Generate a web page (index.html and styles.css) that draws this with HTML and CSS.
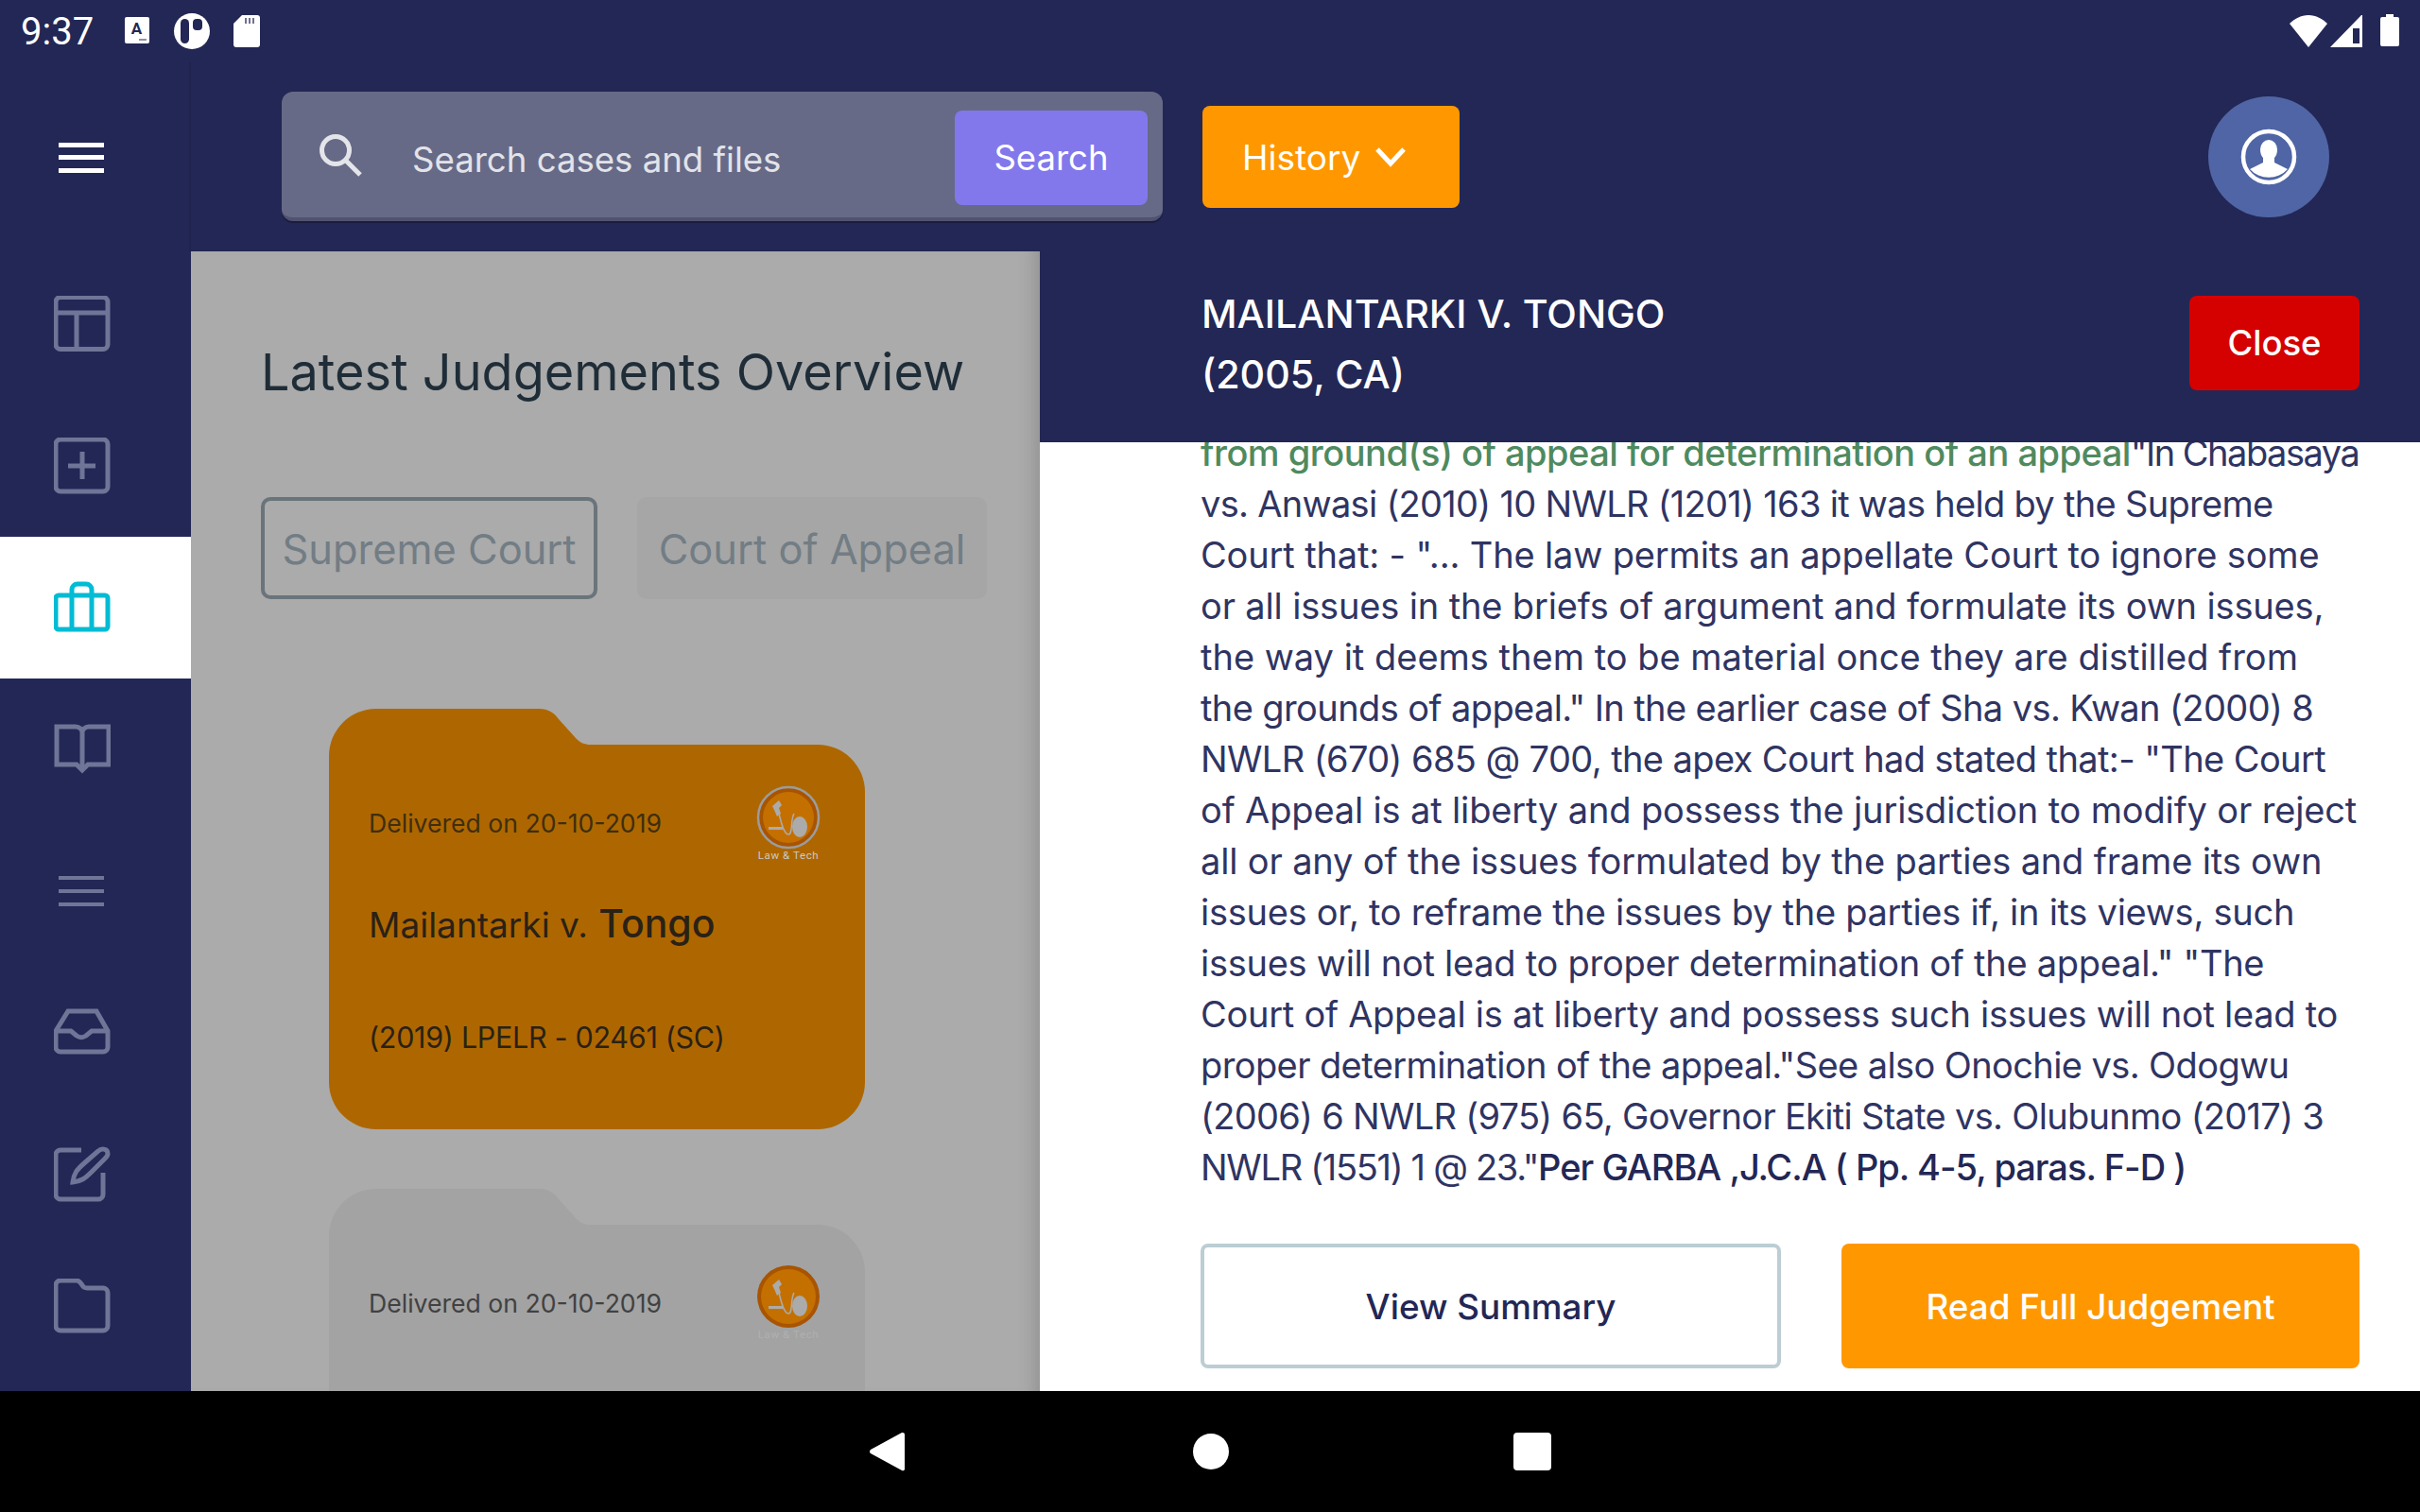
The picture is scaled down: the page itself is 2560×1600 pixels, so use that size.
FILE: index.html
```html
<!DOCTYPE html>
<html lang="en">
<head>
<meta charset="utf-8">
<title>Latest Judgements</title>
<link rel="stylesheet" href="styles.css">
</head>
<body>
<div class="screen">
  <div class="status">
    <span class="time">9:37</span>
    <svg class="st st-a" viewBox="0 0 26 28"><rect x="0" y="0" width="26" height="28" rx="2" fill="#fff"/><text x="12.500" y="18" class="st-a-t">A</text><path d="M15 23h8v2h-8z" fill="#8f91a8"/></svg>
    <svg class="st st-p" viewBox="0 0 38 38"><circle cx="19" cy="19" r="19" fill="#fff"/><rect x="7" y="6" width="9" height="26" rx="4.500" fill="#232755"/><rect x="20" y="6" width="10" height="12" rx="4" fill="#232755"/></svg>
    <svg class="st st-sd" viewBox="0 0 28 34"><path d="M9 0h16a3 3 0 0 1 3 3v28a3 3 0 0 1-3 3H3a3 3 0 0 1-3-3V9z" fill="#fff"/><path d="M12 3h2v6h-2zM16 3h2v6h-2zM20 3h2v6h-2z" fill="#6f7290"/></svg>
    <span class="status-gap"></span>
    <svg class="st st-wifi" viewBox="0 0 40 34"><path d="M20 34 0 9C5 4 12 0 20 0s15 4 20 9z" fill="#fff"/></svg>
    <svg class="st st-sig" viewBox="0 0 34 34"><path fill-rule="evenodd" d="M33 0h1v34H0zM24 14v16h7V14z" fill="#fff"/></svg>
    <svg class="st st-bat" viewBox="0 0 20 34"><path d="M6 0h8v3h4a2 2 0 0 1 2 2v27a2 2 0 0 1-2 2H2a2 2 0 0 1-2-2V5a2 2 0 0 1 2-2h4z" fill="#fff"/></svg>
  </div>

  <div class="main">
    <aside class="side">
      <div class="menu-slot">
        <svg class="ic-menu" viewBox="0 0 48 32"><path d="M0 0h48v5H0zM0 13h48v5H0zM0 27h48v5H0z" fill="#fff"/></svg>
      </div>
      <div class="item"><svg class="ic" viewBox="0 0 60 60"><g class="ln"><rect x="2" y="2" width="55" height="55" rx="5" transform="translate(0 -.5)"/><path d="M2 18h55M24 18v39"/></g></svg></div>
      <div class="item"><svg class="ic" viewBox="0 0 60 60"><g class="ln"><rect x="2" y="2" width="55" height="55" rx="5"/><path d="M30 15v29M15 30h29"/></g></svg></div>
      <div class="item item-active"><svg class="ic" viewBox="0 0 60 60"><g class="ln ln-act"><rect x="2" y="17" width="55" height="36" rx="3"/><path d="M19 53V11a6 6 0 0 1 6-6h9a6 6 0 0 1 6 6v42"/></g></svg></div>
      <div class="item"><svg class="ic" viewBox="0 0 60 60"><g class="ln"><path d="M3 6h20c4 0 7 3 7 6 0-3 3-6 7-6h21v40H36l-6 6-6-6H3z"/><path d="M30 12v40"/></g></svg></div>
      <div class="item"><svg class="ic" viewBox="0 0 60 60"><path d="M5 14h48v4H5zM5 28h48v4H5zM5 42h48v4H5z" fill="#6f7597"/></svg></div>
      <div class="item"><svg class="ic" viewBox="0 0 60 60"><g class="ln"><path d="M15 7h30l12 21v17a5 5 0 0 1-5 5H7a5 5 0 0 1-5-5V28z"/><path d="M2 28h16l6 5a9 9 0 0 0 10 0l6-5h17"/></g></svg></div>
      <div class="item"><svg class="ic" viewBox="0 0 60 60"><g class="ln"><path d="M29 4H7a5 5 0 0 0-5 5v42a5 5 0 0 0 5 5h40a5 5 0 0 0 5-5V28"/><path d="M20 38c1-9 4-13 12-20L47 5c3-3 10-3 10 3 0 2-1 3-3 5L40 27c-7 7-11 10-20 11z"/></g></svg></div>
      <div class="item item-last"><svg class="ic" viewBox="0 0 60 60"><g class="ln"><path d="M7 2h17c3 0 4 2 6 5 1 2 2 3 5 3h17a5 5 0 0 1 5 5v35a5 5 0 0 1-5 5H7a5 5 0 0 1-5-5V7a5 5 0 0 1 5-5z"/></g></svg></div>
    </aside>

    <div class="work">
      <header class="top">
        <div class="search">
          <svg class="ic-search" viewBox="0 0 48 48"><circle cx="19" cy="19" r="14.500" fill="none" stroke="#e4e5ea" stroke-width="5"/><path d="m29 29 16 16" stroke="#e4e5ea" stroke-width="5"/></svg>
          <span class="search-ph">Search cases and files</span>
          <button class="search-btn">Search</button>
        </div>
        <button class="hist"><span class="hist-t">History</span>
          <svg class="ic-chev" viewBox="0 0 34 24"><path d="m3 4 14 15L31 4" fill="none" stroke="#fff" stroke-width="5"/></svg>
        </button>
        <div class="avatar">
          <svg viewBox="0 0 60 60" class="ic-user"><circle cx="30" cy="30" r="27" fill="none" stroke="#fff" stroke-width="4.500"/><path d="M21 22a9 10 0 0 1 18 0c0 4-1 7-3 9v5l14 7a27 27 0 0 1-40 0l14-7v-5c-2-2-3-5-3-9z" fill="#fff"/></svg>
        </div>
      </header>

      <div class="content">
        <section class="list">
          <h1 class="list-title">Latest Judgements Overview</h1>
          <div class="tabs">
            <span class="tab tab-on">Supreme Court</span>
            <span class="tab tab-off">Court of Appeal</span>
          </div>

          <div class="folder folder-1">
            <svg class="folder-bg" viewBox="0 0 567 445"><path class="shape-1" d="M0 50A50 50 0 0 1 50 0H222c10 0 16 4 21 11l18 20c5 5 9 7 16 7H517a50 50 0 0 1 50 50V395a50 50 0 0 1-50 50H50a50 50 0 0 1-50-50z"/></svg>
            <div class="folder-body">
              <div class="folder-top">
                <span class="delivered">Delivered on 20-10-2019</span>
                <svg class="seal" viewBox="0 0 72 84">
                  <circle cx="36" cy="34" r="32" fill="#a85400" stroke="#9c9c9c" stroke-width="2.500"/>
                  <circle cx="36" cy="34" r="27" fill="#c47000"/>
                  <path d="M19 22l7-6 3 5-3 3 2 6-4 3-3-7z" fill="#ababab"/>
                  <path d="M15 44h15v3H15z" fill="#ababab"/>
                  <path d="M26 30c2 8 5 22 10 22 5 0 2-16 6-22" fill="none" stroke="#ababab" stroke-width="1.500"/>
                  <ellipse cx="48" cy="44" rx="8" ry="11" fill="#ababab"/>
                  <text x="36" y="78" class="seal-t">Law &amp; Tech</text>
                </svg>
              </div>
              <div class="case"><span class="case-a">Mailantarki v.</span> <span class="case-b">Tongo</span></div>
              <div class="cite">(2019) LPELR - 02461 (SC)</div>
            </div>
          </div>

          <div class="folder folder-2">
            <svg class="folder-bg" viewBox="0 0 567 445"><path class="shape-2" d="M0 50A50 50 0 0 1 50 0H222c10 0 16 4 21 11l18 20c5 5 9 7 16 7H517a50 50 0 0 1 50 50V395a50 50 0 0 1-50 50H50a50 50 0 0 1-50-50z"/></svg>
            <div class="folder-body">
              <div class="folder-top">
                <span class="delivered delivered-2">Delivered on 20-10-2019</span>
                <svg class="seal seal-2" viewBox="0 0 72 84">
                  <circle cx="36" cy="34" r="33" fill="#a85400"/>
                  <circle cx="36" cy="34" r="29" fill="#c47000"/>
                  <path d="M19 22l7-6 3 5-3 3 2 6-4 3-3-7z" fill="#ababab"/>
                  <path d="M15 44h15v3H15z" fill="#ababab"/>
                  <path d="M26 30c2 8 5 22 10 22 5 0 2-16 6-22" fill="none" stroke="#ababab" stroke-width="1.500"/>
                  <ellipse cx="48" cy="44" rx="8" ry="11" fill="#ababab"/>
                  <text x="36" y="78" class="seal-t seal-t2">Law &amp; Tech</text>
                </svg>
              </div>
              <div class="case case-2"><span class="case-a">Mailantarki v.</span> <span class="case-b">Tongo</span></div>
            </div>
          </div>
        </section>

        <section class="detail">
          <div class="detail-head">
            <h2 class="detail-title">MAILANTARKI V. TONGO<br>(2005, CA)</h2>
            <button class="close">Close</button>
          </div>
          <div class="detail-scroll">
            <p class="body-text">
              <span class="l"><span class="green">from ground(s) of appeal for determination of an appeal</span><span class="after-green">"In Chabasaya</span></span>
              <span class="l t4">vs. Anwasi (2010) 10 NWLR (1201) 163 it was held by the Supreme</span>
              <span class="l t1">Court that: - "... The law permits an appellate Court to ignore some</span>
              <span class="l t1">or all issues in the briefs of argument and formulate its own issues,</span>
              <span class="l">the way it deems them to be material once they are distilled from</span>
              <span class="l t3">the grounds of appeal." In the earlier case of Sha vs. Kwan (2000) 8</span>
              <span class="l t3">NWLR (670) 685 @ 700, the apex Court had stated that:- "The Court</span>
              <span class="l t1">of Appeal is at liberty and possess the jurisdiction to modify or reject</span>
              <span class="l t1">all or any of the issues formulated by the parties and frame its own</span>
              <span class="l t2">issues or, to reframe the issues by the parties if, in its views, such</span>
              <span class="l t2">issues will not lead to proper determination of the appeal." "The</span>
              <span class="l t2">Court of Appeal is at liberty and possess such issues will not lead to</span>
              <span class="l t3">proper determination of the appeal."See also Onochie vs. Odogwu</span>
              <span class="l t4">(2006) 6 NWLR (975) 65, Governor Ekiti State vs. Olubunmo (2017) 3</span>
              <span class="l t5">NWLR (1551) 1 @ 23."<strong class="per">Per GARBA ,J.C.A ( Pp. 4-5, paras. F-D )</strong></span>
            </p>
            <div class="actions">
              <button class="btn-sum">View Summary</button>
              <button class="btn-read">Read Full Judgement</button>
            </div>
          </div>
        </section>
      </div>
    </div>
  </div>

  <div class="navbar">
    <svg class="nv nv-back" viewBox="0 0 38 42"><path d="M36 1a2 2 0 0 1 2 2v36a2 2 0 0 1-3 2L2 23a2.500 2.500 0 0 1 0-4L35 1z" fill="#fff"/></svg>
    <svg class="nv nv-home" viewBox="0 0 38 38"><circle cx="19" cy="19" r="19" fill="#fff"/></svg>
    <svg class="nv nv-rec" viewBox="0 0 40 40"><rect width="40" height="40" rx="4" fill="#fff"/></svg>
  </div>
</div>
</body>
</html>
```

FILE: styles.css
```css
* { box-sizing: border-box; }
html, body { margin: 0; padding: 0; }
body { width: 2560px; height: 1600px; overflow: hidden; background: #000; font-family: "Inter", "Noto Sans", sans-serif; }
button { font-family: inherit; border: 0; padding: 0; }
h1, h2, p { margin: 0; font-weight: 400; }

.screen { width: 2560px; height: 1600px; display: flex; flex-direction: column; }

.status { height: 66px; flex: none; background: #232755; display: flex; align-items: center; padding: 0 22px 0 22px; }
.time { font-family: Roboto, sans-serif; font-size: 40px; color: #fff; width: 110px; }
.st { display: block; flex: none; }
.st-a { width: 26px; height: 28px; margin-right: 26px; margin-top: -3px; }
.st-a-t { font: 700 17px "Roboto", sans-serif; fill: #232755; text-anchor: middle; }
.st-p { width: 38px; height: 38px; margin-right: 25px; margin-top: -1px; }
.st-sd { width: 28px; height: 34px; }
.status-gap { flex: 1; }
.st-wifi { width: 40px; height: 34px; margin-right: 3px; }
.st-sig { width: 34px; height: 34px; margin-right: 19px; }
.st-bat { width: 20px; height: 34px; margin-top: -2px; }

.main { flex: 1; min-height: 0; display: flex; background: #232755; }

.side { width: 202px; flex: none; display: flex; flex-direction: column; }
.menu-slot { height: 202px; display: flex; align-items: center; justify-content: center; }
.ic-menu { width: 48px; height: 32px; display: block; margin-right: 30px; }
.item { height: 150px; flex: none; display: flex; align-items: center; justify-content: center; padding-right: 28px; }
.item-active { background: #fff; }
.item-last { height: 130px; }
.ic { width: 60px; height: 60px; display: block; }
.ln { fill: none; stroke: #6f7597; stroke-width: 5; }
.ln-act { stroke: #00bcd4; }

.work { flex: 1; min-width: 0; display: flex; flex-direction: column; }
.top { height: 200px; flex: none; display: flex; align-items: center; padding: 0 96px; box-shadow: -2px 0 0 #20234e; position: relative; }
.search { width: 932px; height: 137px; margin-top: -1px; border-radius: 12px; background: #666a86; border-bottom: 4px solid #50526f; box-shadow: 0 2px 0 #1a1c3e; display: flex; align-items: center; padding: 6px 16px 0 38px; }
.ic-search { width: 48px; height: 48px; flex: none; display: block; margin-right: 52px; margin-top: -6px; }
.search-ph { flex: 1; font-size: 36.6px; color: #e2e3e9; padding-top: 4px; }
.search-btn { width: 204px; height: 100px; border-radius: 8px; background: #8278ec; color: #fff; font-size: 36.5px; }
.hist { width: 272px; height: 108px; margin-left: 42px; border-radius: 8px; background: #ff9800; color: #fff; font-size: 37px; display: flex; align-items: center; justify-content: flex-start; gap: 15px; padding-left: 42px; margin-top: -1px; }
.hist-t { padding-top: 2px; }
.ic-chev { width: 34px; height: 24px; display: block; }
.avatar { width: 128px; height: 128px; border-radius: 50%; background: #5065a5; margin-left: auto; display: flex; align-items: center; justify-content: center; }
.ic-user { width: 60px; height: 60px; display: block; }

.content { flex: 1; min-height: 0; display: flex; }

.list { width: 898px; flex: none; background: #ababab; padding: 0 0 0 74px; overflow: hidden; box-shadow: inset -20px 0 20px -18px #8a8a8a; }
.list-title { font-size: 54px; line-height: 64px; color: #1f2d38; padding-top: 96px; white-space: nowrap; }
.tabs { display: flex; gap: 42px; margin-top: 100px; }
.tab { height: 108px; border-radius: 10px; font-size: 43.4px; color: #727d85; display: flex; align-items: center; justify-content: center; white-space: nowrap; padding-top: 2px; }
.tab-on { width: 356px; border: 4px solid #6a747b; }
.tab-off { width: 370px; background: #a6a6a6; }

.folder { position: relative; width: 567px; height: 445px; margin-left: 72px; }
.folder-1 { margin-top: 116px; }
.folder-2 { margin-top: 63px; }
.folder-bg { position: absolute; inset: 0; width: 567px; height: 445px; display: block; }
.shape-1 { fill: #ae6700; }
.shape-2 { fill: #a3a3a3; }
.folder-body { position: relative; padding: 71px 45px 0 42px; }
.folder-top { display: flex; justify-content: space-between; align-items: flex-start; height: 108px; }
.delivered { font-size: 26.6px; line-height: 36px; color: #3f2e10; margin-top: 32px; }
.delivered-2 { color: #414141; }
.seal { width: 72px; height: 84px; display: block; margin-top: 10px; flex: none; }
.seal-2 { margin-top: 9px; }
.seal-t { font: 400 11.5px Roboto, sans-serif; fill: #c9c9c9; text-anchor: middle; letter-spacing: .6px; }
.seal-t2 { fill: #b0b0b0; }
.case { margin-top: 18px; color: #2a2117; line-height: 60px; white-space: nowrap; }
.case-a { font-size: 37px; }
.case-b { font-size: 41px; font-weight: 500; margin-left: 7px; }
.case-2 { color: #333; margin-top: 20px; }
.cite { margin-top: 60px; font-size: 30.5px; letter-spacing: -.3px; line-height: 44px; color: #2a2117; }

.detail { flex: 1; min-width: 0; background: #fff; display: flex; flex-direction: column; }
.detail-head { height: 202px; flex: none; background: #232755; display: flex; align-items: center; justify-content: space-between; padding: 0 64px 0 171px; position: relative; }
.detail-title { font-size: 41.2px; line-height: 64px; color: #fff; font-weight: 500; margin-top: -7px; }
.close { width: 180px; height: 100px; border-radius: 8px; background: #d50000; color: #fff; font-size: 36.5px; font-weight: 500; margin-top: -8px; }
.detail-scroll { flex: 1; min-height: 0; overflow: hidden; padding: 0 64px 0 170px; }
.body-text { font-size: 38px; line-height: 54px; color: #2f3462; white-space: nowrap; margin-top: -16px; }
.l { display: block; }
.t1 { letter-spacing: -.15px; }
.t2 { letter-spacing: -.27px; }
.t3 { letter-spacing: -.6px; }
.t4 { letter-spacing: -.7px; }
.t5 { letter-spacing: -1.3px; }
.green { color: #4f8a5f; font-weight: 500; letter-spacing: -.5px; }
.after-green { letter-spacing: -1.5px; }
.per { font-weight: 500; color: #232755; letter-spacing: -1px; }
.actions { display: flex; justify-content: space-between; margin-top: 54px; }
.btn-sum { width: 614px; height: 132px; border-radius: 8px; background: #fff; border: 4px solid #bccdd4; color: #232755; font-size: 36.8px; font-weight: 500; }
.btn-read { width: 548px; height: 132px; border-radius: 8px; background: #ff9800; color: #fff; font-size: 36.8px; font-weight: 500; }

.navbar { height: 128px; flex: none; background: #000; position: relative; display: flex; align-items: center; }
.nv { display: block; flex: none; }
.nv-back { width: 38px; height: 42px; margin-left: 919px; }
.nv-home { width: 38px; height: 38px; margin-left: 305px; }
.nv-rec { width: 40px; height: 40px; margin-left: 301px; }
```
